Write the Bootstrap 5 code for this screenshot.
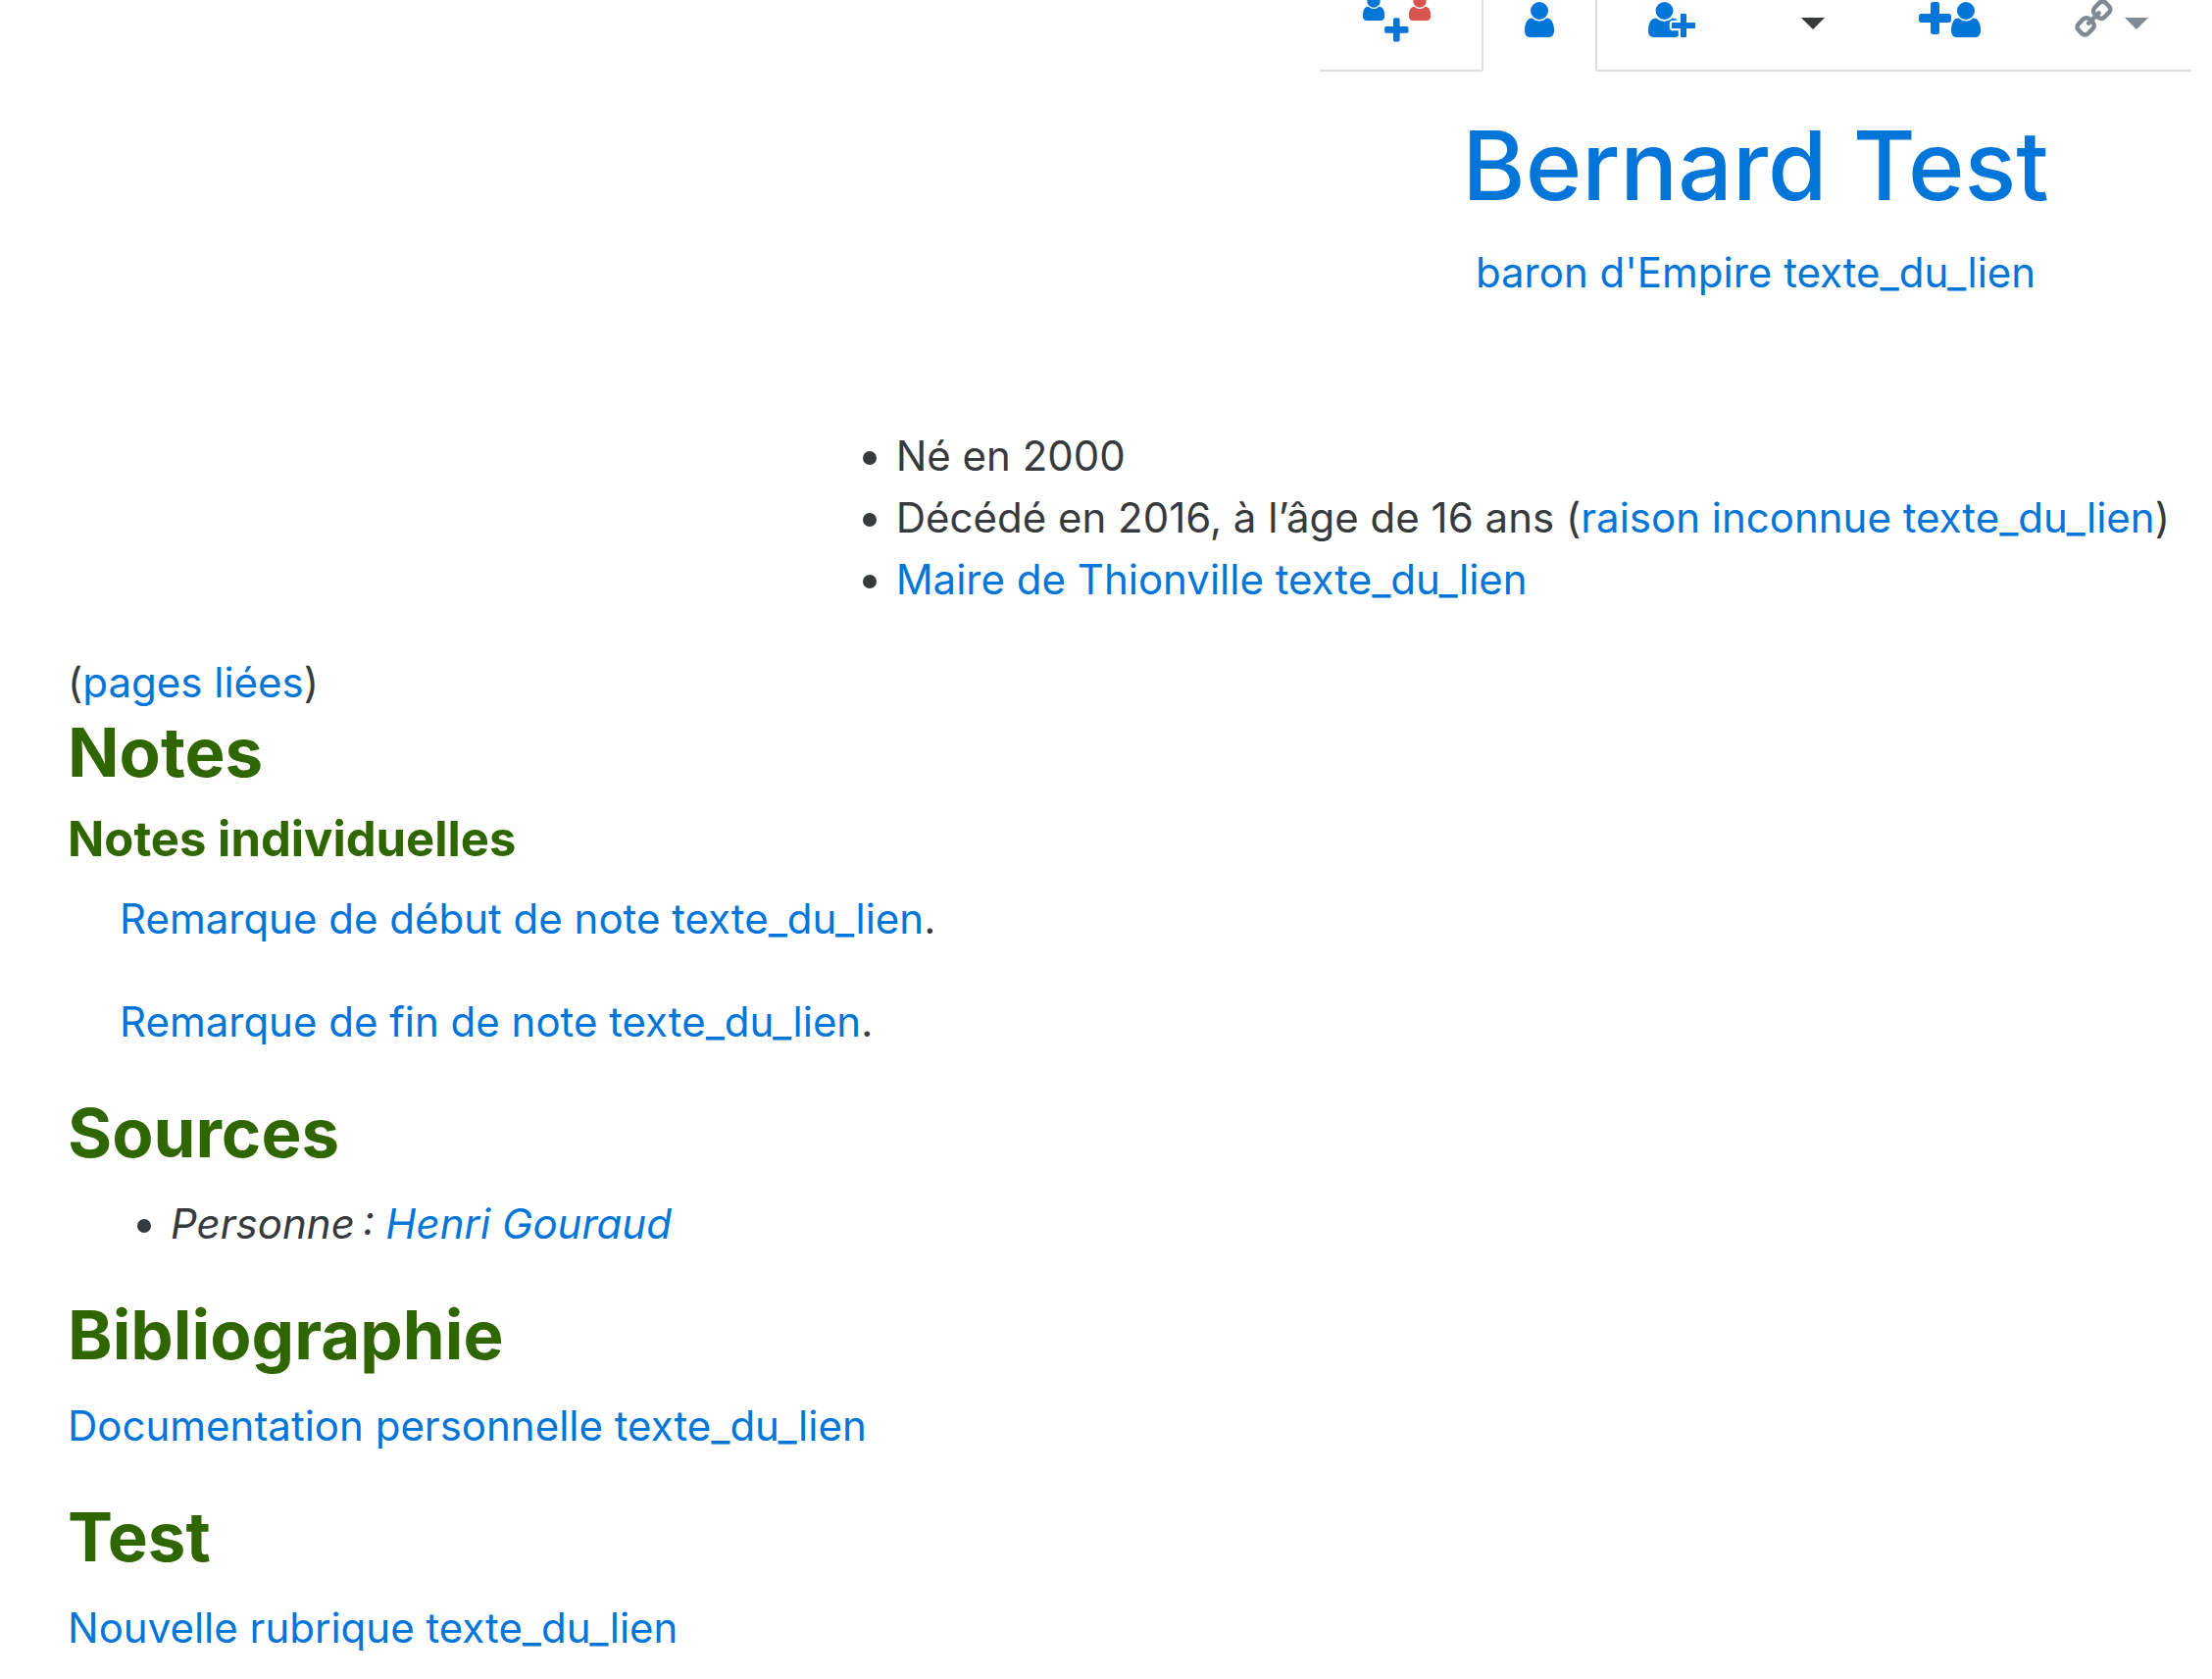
<!DOCTYPE html>
<html lang="fr">
<head>
<meta charset="utf-8">
<meta name="viewport" content="width=device-width, initial-scale=1">
<title>Bernard Test</title>
<link href="https://cdn.jsdelivr.net/npm/bootstrap@5.3.0/dist/css/bootstrap.min.css" rel="stylesheet">
<style>
body { font-family: Inter, sans-serif; font-size: 42px; line-height: 63px; color: #373a3c; background: #fff; }
a { color: #0275d8; text-decoration: none; }
.page-wrap { padding: 0 21px 0 69px; }
.person-tabs { border-bottom: 2px solid #ddd; gap: 8px; }
.person-tabs .nav-link { display: flex; align-items: flex-start; padding: 0 42px 27px; border: 2px solid transparent; border-top: 0; margin-bottom: -2px; border-radius: 0; color: #0275d8; font-size: 42px; }
.person-tabs .nav-link.active { background: #fff; color: #0275d8; border-color: #ddd; border-bottom-color: #fff; }
.person-tabs svg { display: block; height: 44px; fill: currentColor; }
.person-tabs .dropdown-toggle::after { margin: 18px 0 0 12px; border-width: 12px 12px 0; border-style: solid; border-color: currentColor transparent transparent; }
.person-tabs .nav-link.tone-dark { color: #373a3c; }
.person-tabs .nav-link.tone-muted { color: #818a91; }
.person-name { font-size: 98px; line-height: 112px; font-weight: 500; margin: 40px 0 21px; }
.facts { margin: 124px 22px 42px 0; padding-left: 53px; }
h2, h3 { color: #306600; font-weight: 700; margin: 0 0 21px; }
h2 { font-size: 69px; line-height: 80px; }
h3 { font-size: 49px; line-height: 56px; }
.section-gap { margin-top: 42px; }
.notes-body { padding-left: 53px; }
.notes-body p { margin: 0 0 42px; }
.source-list { padding-left: 105px; margin: 0; }
</style>
</head>
<body>
<div class="page-wrap">
  <header class="d-flex flex-column align-items-end">
    <div class="text-center">
      <ul class="nav person-tabs flex-nowrap">
        <li class="nav-item"><a class="nav-link" href="#" aria-label="Ajouter une famille">
          <svg width="69" viewBox="0 0 69 44">
            <defs>
              <path id="user" d="M1536 1399q0 109-62.5 187t-150.5 78h-854q-88 0-150.5-78t-62.5-187q0-85 8.5-160.5t31.5-152 58.5-131 94-89 134.5-34.5q131 128 313 128t313-128q76 0 134.5 34.5t94 89 58.5 131 31.5 152 8.5 160.5zm-256-887q0 159-112.5 271.5t-271.5 112.5-271.5-112.5-112.5-271.5 112.5-271.5 271.5-112.5 271.5 112.5 112.5 271.5z"/>
              <path id="plus" d="M1600 736v192q0 40-28 68t-68 28h-416v416q0 40-28 68t-68 28h-192q-40 0-68-28t-28-68v-416h-416q-40 0-68-28t-28-68v-192q0-40 28-68t68-28h416v-416q0-40 28-68t68-28h192q40 0 68 28t28 68v416h416q40 0 68 28t28 68z"/>
            </defs>
            <use href="#user" transform="translate(-4.5 -7.7) scale(.0173)"/>
            <use href="#user" fill="#d9534f" transform="translate(42.5 -7.7) scale(.0173)"/>
            <use href="#plus" transform="translate(18.8 16) scale(.0173)"/>
          </svg></a></li>
        <li class="nav-item"><a class="nav-link active" href="#" aria-label="Personne" aria-current="page">
          <svg width="30" viewBox="0 0 30 44"><use href="#user" transform="translate(-6 -1) scale(.02344)"/></svg></a></li>
        <li class="nav-item"><a class="nav-link" href="#" aria-label="Ajouter un enfant">
          <svg width="48" viewBox="0 0 48 44"><path transform="translate(0 -1) scale(.02344)" d="M704 896q-159 0-271.5-112.5t-112.5-271.5 112.5-271.5 271.5-112.5 271.5 112.5 112.5 271.5-112.5 271.5-271.5 112.5zm960 128h352q13 0 22.5 9.5t9.5 22.5v192q0 13-9.5 22.5t-22.5 9.5h-352v352q0 13-9.5 22.5t-22.5 9.5h-192q-13 0-22.5-9.5t-9.5-22.5v-352h-352q-13 0-22.5-9.5t-9.5-22.5v-192q0-13 9.5-22.5t22.5-9.5h352v-352q0-13 9.5-22.5t22.5-9.5h192q13 0 22.5 9.5t9.5 22.5v352zm-736 224q0 52 38 90t90 38h256v238q-68 50-171 50h-874q-121 0-194-69t-73-190q0-53 3.5-103.5t14-109 26.5-108.5 43-97.5 62-81 85.5-53.5 111.5-20q19 0 39 17 79 61 154.5 91.5t164.5 30.5 164.5-30.5 154.5-91.5q20-17 39-17 132 0 217 96h-223q-52 0-90 38t-38 90v192z"/></svg></a></li>
        <li class="nav-item dropdown"><a class="nav-link dropdown-toggle tone-dark" href="#" role="button" data-bs-toggle="dropdown" aria-label="Plus"></a></li>
        <li class="nav-item"><a class="nav-link" href="#" aria-label="Ajouter une personne">
          <svg width="63" viewBox="0 0 63 44"><use href="#plus" transform="translate(-4.5 -1) scale(.02344)"/><use href="#user" transform="translate(27 -1) scale(.02344)"/></svg></a></li>
        <li class="nav-item dropdown"><a class="nav-link dropdown-toggle tone-muted" href="#" role="button" data-bs-toggle="dropdown" aria-label="Liens">
          <svg width="39" viewBox="0 0 39 44"><path transform="translate(40.4 -1) scale(-.02344 .02344)" d="M1520 1216q0-40-28-68l-208-208q-28-28-68-28-42 0-72 32 3 3 19 18.5t21.5 21.5 15 19 13 25.5 3.5 27.5q0 40-28 68t-68 28q-15 0-27.5-3.5t-25.5-13-19-15-21.5-21.5-18.5-19q-33 31-33 73 0 40 28 68l206 207q27 27 68 27 40 0 68-26l147-146q28-28 28-67zm-703-705q0-40-28-68l-206-207q-28-28-68-28-39 0-68 27l-147 146q-28 28-28 67 0 40 28 68l208 208q27 27 68 27 42 0 72-31-3-3-19-18.5t-21.5-21.5-15-19-13-25.5-3.5-27.5q0-40 28-68t68-28q15 0 27.5 3.5t25.5 13 19 15 21.5 21.5 18.5 19q33-31 33-73zm895 705q0 120-85 203l-147 146q-83 83-203 83-121 0-204-85l-206-207q-83-83-83-203 0-123 88-209l-88-88q-86 88-208 88-120 0-204-84l-208-208q-84-84-84-204t85-203l147-146q83-83 203-83 121 0 204 85l206 207q83 83 83 203 0 123-88 209l88 88q86-88 208-88 120 0 204 84l208 208q84 84 84 204z"/></svg></a></li>
      </ul>
      <h1 class="person-name"><a href="#">Bernard Test</a></h1>
      <div><a href="#">baron d'Empire texte_du_lien</a></div>
    </div>
    <ul class="facts">
      <li>Né en 2000</li>
      <li>Décédé en 2016, à l’âge de 16 ans (<a href="#">raison inconnue texte_du_lien</a>)</li>
      <li><a href="#">Maire de Thionville texte_du_lien</a></li>
    </ul>
  </header>
  <main>
    <div>(<a href="#">pages liées</a>)</div>
    <section>
      <h2>Notes</h2>
      <h3>Notes individuelles</h3>
      <div class="notes-body">
        <p><a href="#">Remarque de début de note texte_du_lien</a>.</p>
        <p><a href="#">Remarque de fin de note texte_du_lien</a>.</p>
      </div>
    </section>
    <section class="section-gap">
      <h2>Sources</h2>
      <ul class="source-list"><li><em>Personne&#8239;: <a href="#">Henri Gouraud</a></em></li></ul>
    </section>
    <section class="section-gap">
      <h2>Bibliographie</h2>
      <div><a href="#">Documentation personnelle texte_du_lien</a></div>
    </section>
    <section class="section-gap">
      <h2>Test</h2>
      <div><a href="#">Nouvelle rubrique texte_du_lien</a></div>
    </section>
  </main>
</div>
<script src="https://cdn.jsdelivr.net/npm/bootstrap@5.3.0/dist/js/bootstrap.bundle.min.js"></script>
</body>
</html>
